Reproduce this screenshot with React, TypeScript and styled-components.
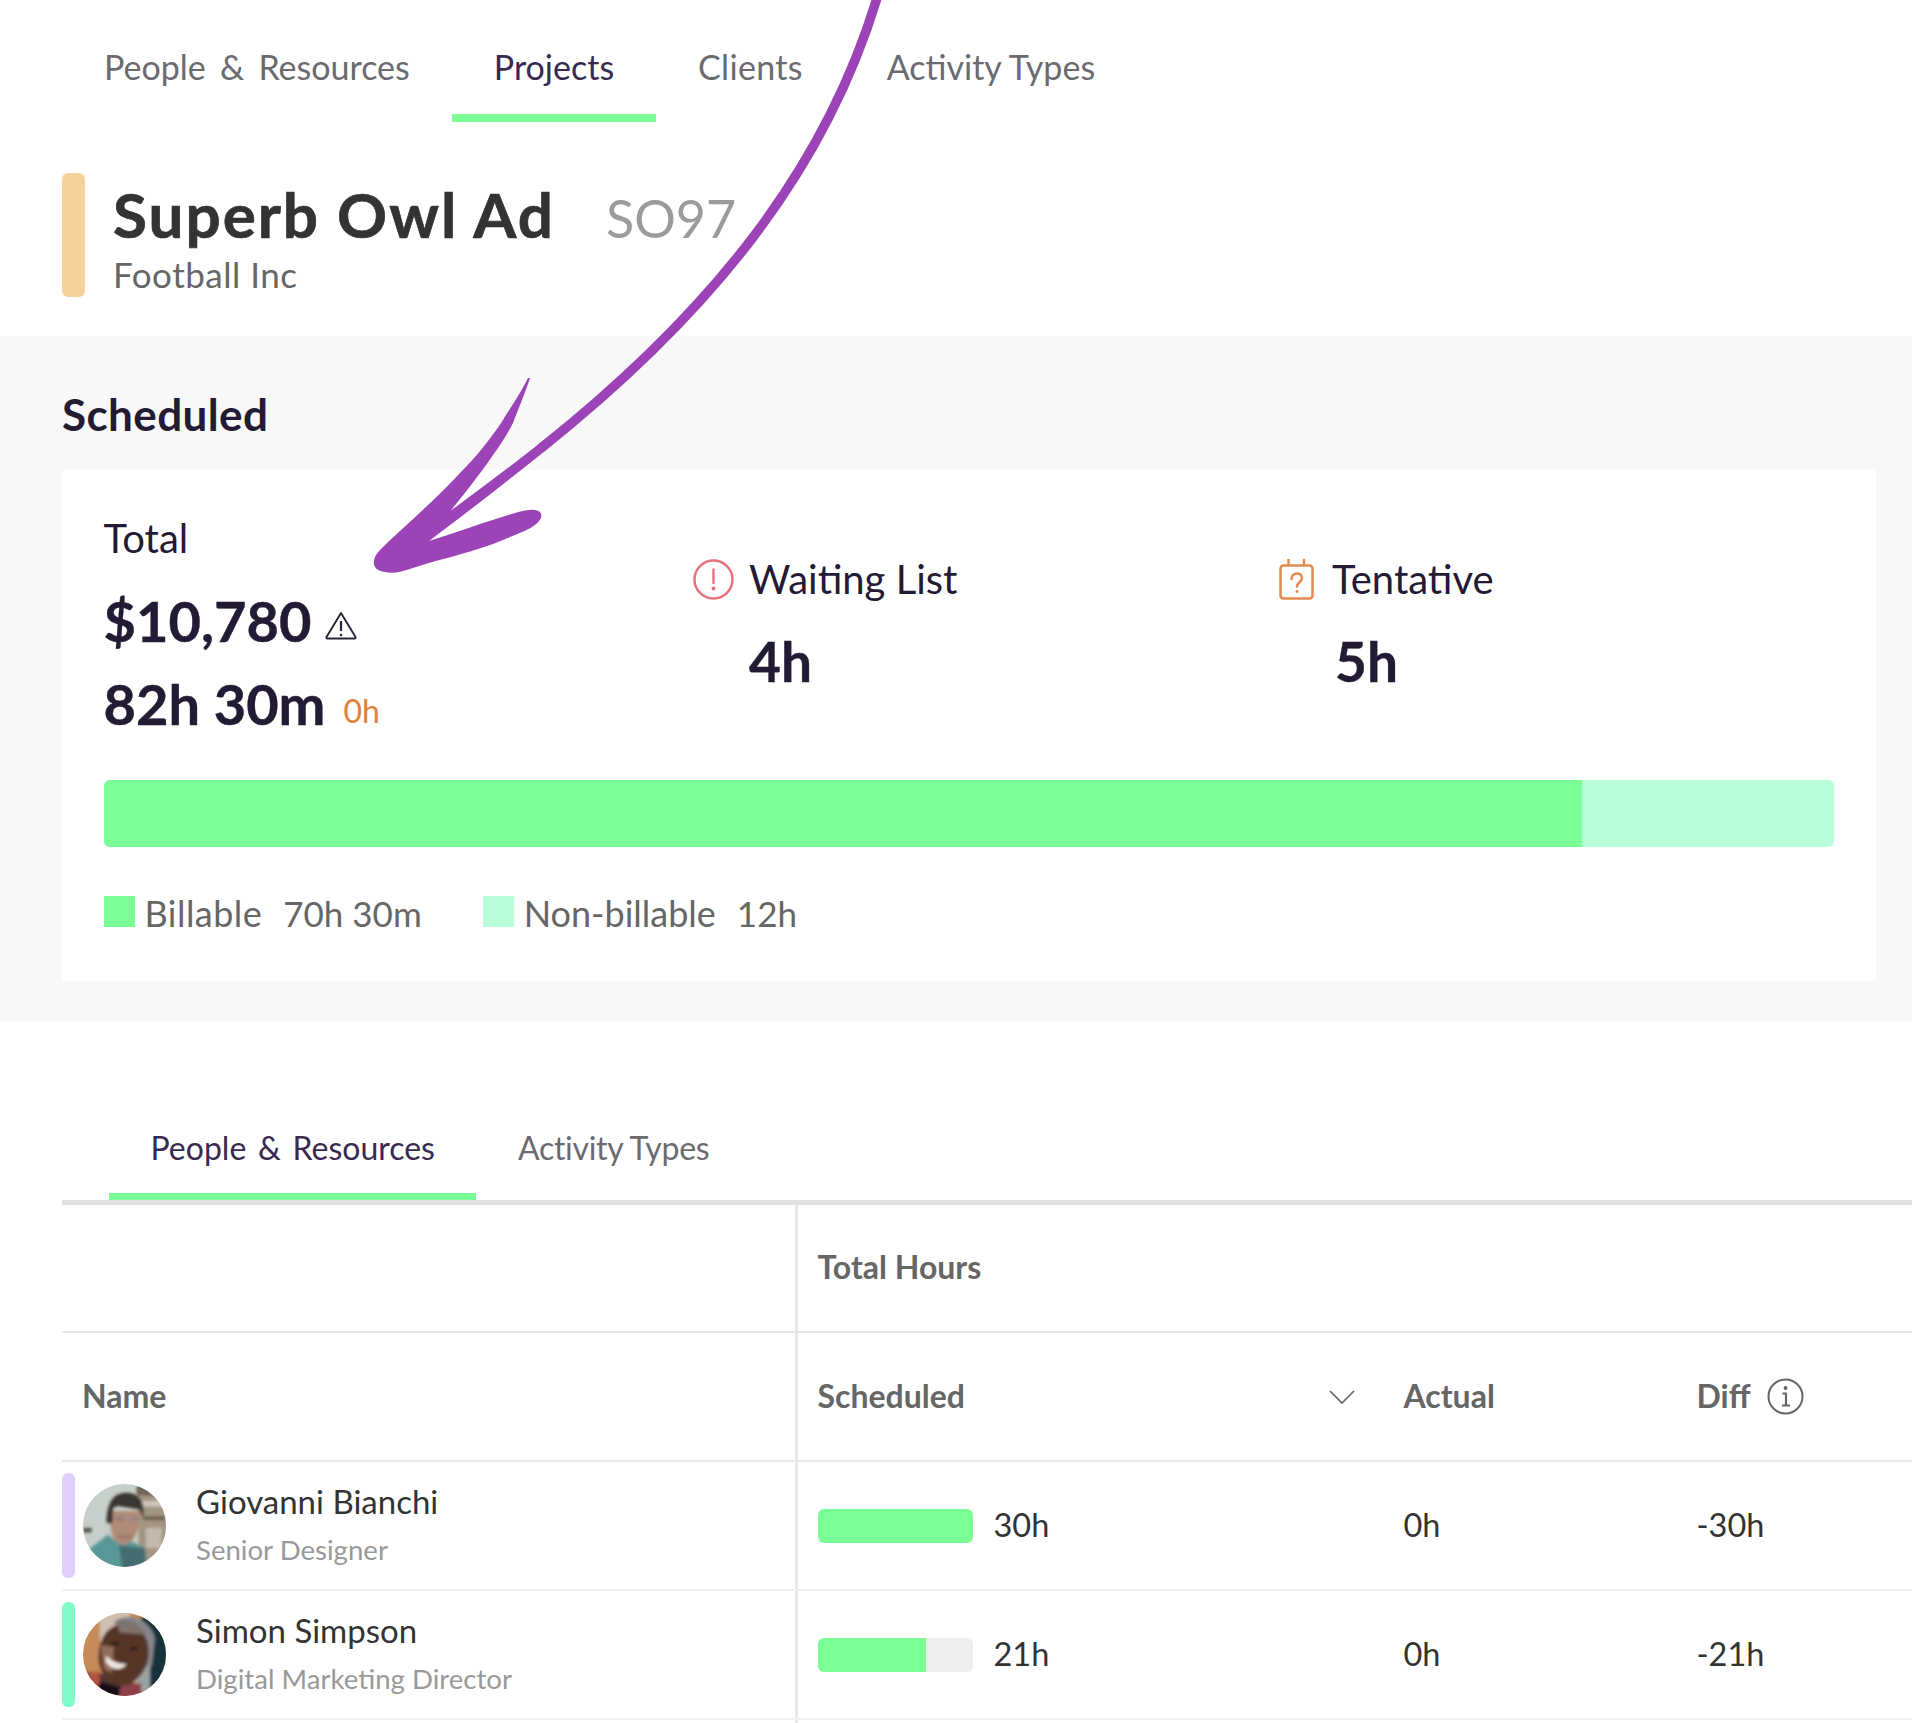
import React from "react";
import styled, { createGlobalStyle } from "styled-components";

const Global = createGlobalStyle`
  html, body { margin: 0; padding: 0; background: #fff; }
  body { font-family: Lato, "Liberation Sans", sans-serif; }
  * { box-sizing: border-box; }
`;

const Page = styled.div`
  position: relative;
  width: 1912px;
  height: 1723px;
  overflow: hidden;
  background: #fff;
  font-family: Lato, "Liberation Sans", sans-serif;
`;

const TopTabs = styled.nav`
  display: flex;
  padding-left: 62px;
  height: 122px;
`;

const TopTab = styled.div<{ $active?: boolean; $spread?: number }>`
  height: 122px;
  padding: 45px 42px 0;
  font-size: 34px;
  letter-spacing: ${(p) => p.$spread ?? 0}px;
  line-height: 44px;
  white-space: nowrap;
  color: ${(p) => (p.$active ? "#38294f" : "#6a6a70")};
  border-bottom: 8px solid ${(p) => (p.$active ? "#7aff96" : "transparent")};
`;

const Amp = styled.span<{ $space: number }>`
  margin: 0 ${(p) => p.$space}px;
`;

const ProjectHeader = styled.header`
  display: flex;
  height: 124px;
  margin: 51px 0 39px 62px;
`;

const ColorTag = styled.div<{ $color: string }>`
  flex: none;
  width: 23px;
  height: 124px;
  border-radius: 6px;
  background: ${(p) => p.$color};
`;

const ProjectInfo = styled.div`
  padding: 5px 0 0 28px;
`;

const TitleRow = styled.div`
  display: flex;
  align-items: baseline;
  gap: 51px;
  height: 72px;
`;

const Title = styled.h1`
  margin: 0;
  font-size: 62px;
  font-weight: 700;
  letter-spacing: 2px;
  line-height: 72px;
  color: #333;
  -webkit-text-stroke: 0.7px #333;
`;

const Code = styled.span`
  font-size: 52px;
  line-height: 72px;
  color: #9b9b9b;
`;

const Client = styled.div`
  font-size: 35px;
  letter-spacing: 0.5px;
  line-height: 42px;
  margin-top: 3px;
  color: #666;
`;

const Summary = styled.section`
  height: 686px;
  padding: 50px 36px 0 62px;
  background: #f8f8f8;
`;

const SummaryTitle = styled.h2`
  margin: 0 0 28px;
  font-size: 44px;
  font-weight: 700;
  letter-spacing: 0.4px;
  line-height: 56px;
  color: #231a33;
`;

const Card = styled.div`
  height: 511px;
  padding: 46px 42px 0 41.5px;
  background: #fff;
`;

const Stats = styled.div`
  display: grid;
  grid-template-columns: 589.5px 586px 1fr;
  height: 229px;
`;

const Stat = styled.div<{ $offset?: boolean }>`
  padding-top: ${(p) => (p.$offset ? "41px" : "0")};
`;

const StatLabel = styled.div<{ $under?: number }>`
  display: flex;
  align-items: center;
  gap: 15px;
  height: 44px;
  margin-bottom: ${(p) => p.$under ?? 0}px;
  font-size: 40px;
  line-height: 44px;
  color: #231a33;
`;

const StatLine = styled.div`
  display: flex;
  align-items: center;
  height: 83px;
`;

const BigValue = styled.span`
  font-size: 56px;
  font-weight: 700;
  line-height: 83px;
  color: #231a33;
  -webkit-text-stroke: 0.4px #231a33;
`;

const Delta = styled.span`
  margin: 14px 0 0 18px;
  font-size: 32px;
  line-height: 40px;
  color: #e08038;
`;

const WarningWrap = styled.span`
  display: flex;
  margin: 10px 0 0 13px;
`;

const Value = styled.div`
  margin: 19px 0 0 56px;
  font-size: 55px;
  font-weight: 700;
  line-height: 83px;
  color: #231a33;
  -webkit-text-stroke: 0.4px #231a33;
`;

const Bar = styled.div`
  display: flex;
  height: 67px;
  margin-top: 35px;
  border-radius: 6px;
  overflow: hidden;
  background: #bafdd9;
`;

const BarFill = styled.div`
  height: 100%;
  background: #7aff96;
`;

const Legend = styled.div`
  display: flex;
  gap: 61px;
  margin-top: 49px;
`;

const LegendItem = styled.div`
  display: flex;
  align-items: center;
  height: 31px;
  font-size: 36px;
  color: #666;
`;

const Swatch = styled.span<{ $color: string }>`
  flex: none;
  width: 31px;
  height: 31px;
  margin: 0 10px 0 0;
  background: ${(p) => p.$color};
`;

const LegendLabel = styled.span<{ $spread?: number }>`
  padding-top: 2px;
  letter-spacing: ${(p) => p.$spread ?? 0}px;
`;

const LegendValue = styled.span`
  margin-left: 21px;
  padding-top: 2px;
  font-size: 35px;
`;

const SubTabs = styled.nav`
  display: flex;
  margin: 97px 0 0 62px;
  padding-left: 47px;
  height: 86px;
  border-bottom: 5px solid #e2e2e2;
`;

const SubTab = styled.div<{ $active?: boolean }>`
  height: 81px;
  padding: 8px 41.5px 0;
  font-size: 32px;
  letter-spacing: ${(p) => (p.$active ? "0" : "-0.3px")};
  line-height: 42px;
  white-space: nowrap;
  color: ${(p) => (p.$active ? "#38294f" : "#6a6a70")};
  border-bottom: 7px solid ${(p) => (p.$active ? "#7aff96" : "transparent")};
`;

const Table = styled.div`
  margin-left: 62px;
`;

const Row = styled.div<{ $height: number; $line: string }>`
  display: grid;
  grid-template-columns: 733px 1fr;
  height: ${(p) => p.$height}px;
  border-bottom: 2px solid ${(p) => p.$line};
`;

const NameCell = styled.div`
  display: flex;
  align-items: center;
  border-right: 3px solid #e8e8e8;
  margin-right: -3px;
`;

const NameHead = styled.span`
  margin-left: 20px;
  padding-bottom: 3px;
  font-size: 32px;
  font-weight: 700;
  color: #666;
`;

const RowTag = styled.div<{ $color: string }>`
  flex: none;
  width: 13px;
  height: 105px;
  border-radius: 6px;
  background: ${(p) => p.$color};
`;

const AvatarWrap = styled.div`
  flex: none;
  width: 83px;
  height: 83px;
  margin: 0 30px 0 8px;
  border-radius: 50%;
  overflow: hidden;
`;

const PersonName = styled.div`
  padding-bottom: 1px;
  font-size: 33px;
  line-height: 47px;
  color: #333;
`;

const PersonRole = styled.div`
  font-size: 27.6px;
  line-height: 48px;
  color: #999;
`;

const Cells = styled.div`
  display: grid;
  grid-template-columns: 586px 293px 1fr;
  align-items: center;
  padding-left: 22.5px;
  min-width: 0;
`;

const HeadText = styled.span`
  display: block;
  padding-bottom: 3px;
  font-size: 32px;
  font-weight: 700;
  color: #666;
`;

const HeadCell = styled.div<{ $between?: boolean }>`
  display: flex;
  align-items: center;
  justify-content: ${(p) => (p.$between ? "space-between" : "flex-start")};
  gap: 16px;
  padding-right: ${(p) => (p.$between ? "49px" : "0")};
`;

const HoursCell = styled.div`
  display: flex;
  align-items: center;
  gap: 21px;
`;

const HoursText = styled.span`
  padding-bottom: 2px;
  font-size: 32.5px;
  color: #333;
`;

const MiniBar = styled.div`
  width: 155px;
  height: 34px;
  border-radius: 6px;
  overflow: hidden;
  background: #eee;
`;

const MiniFill = styled.div`
  height: 100%;
  background: #7aff96;
`;

const PlainCell = styled.div`
  padding-bottom: 2px;
  font-size: 32.5px;
  color: #333;
`;

const ArrowSvg = styled.svg`
  position: absolute;
  left: 0;
  top: 0;
  pointer-events: none;
`;

const Arrow = () => (
  <ArrowSvg width="1912" height="700" viewBox="0 0 1912 700">
    <path
      fill="none"
      stroke="#9b43b7"
      strokeWidth="9.5"
      d="M877 -2 C825 170 711.6 312.6 540 449"
    />
    <path
      fill="#9b43b7"
      d="M544 440 L540 443 C511 466 480.7 488.7 450.7 510.7 C480 475 505 440 513 423 C522 400 528 385 530 378 L528 378 C518 398 510 408 503 420 C490 440 475 458 460 473 C430 505 400 530 380 550 C372 558 370 570 385 572 C393 574 400 572 410 569 C432 561 480 551 510 537 C520 533 527 530 532 527 C544 520 544 511 535 510 C530 509 522 511 515 513 C490 520 455 533 429 541 C466.6 513 503.3 484 540 455 L548 448 Z"
    />
  </ArrowSvg>
);

const WaitingIcon = () => (
  <svg width="41" height="41" viewBox="0 0 41 41" fill="none">
    <circle cx="20.5" cy="20.5" r="19" stroke="#e8707a" strokeWidth="2.4" />
    <path d="M20.5 10.5 V24" stroke="#e8707a" strokeWidth="2.4" strokeLinecap="round" />
    <circle cx="20.5" cy="29.5" r="1.9" fill="#e8707a" />
  </svg>
);

const TentativeIcon = () => (
  <svg width="38" height="41" viewBox="0 0 38 41" fill="none" stroke="#e58a4e" strokeWidth="2.5">
    <rect x="1.5" y="6.5" width="32" height="33" rx="3" />
    <path d="M9.5 0 V6 M25 0 V6" />
    <path d="M12.5 20 C12.5 12.5 23 13 23 19 C23 23 18 23.5 18 27.5" strokeLinecap="round" />
    <circle cx="18" cy="32.5" r="1.4" fill="#e58a4e" stroke="none" />
  </svg>
);

const WarningIcon = () => (
  <svg width="32" height="29" viewBox="0 0 32 29" fill="none" stroke="#2c2438" strokeWidth="1.9">
    <path d="M16 2 L30.5 26 Q31 27.5 29.5 27.5 L2.5 27.5 Q1 27.5 1.5 26 Z" strokeLinejoin="round" />
    <path d="M16 10 V20" strokeWidth="2.2" />
    <circle cx="16" cy="24" r="1.3" fill="#2c2438" stroke="none" />
  </svg>
);

const Chevron = () => (
  <svg width="26" height="14" viewBox="0 0 26 14" fill="none" stroke="#666" strokeWidth="1.7">
    <path d="M1 1 L13 13 L25 1" />
  </svg>
);

const InfoIcon = () => (
  <svg width="37" height="37" viewBox="0 0 37 37" fill="none" stroke="#666" strokeWidth="2">
    <circle cx="18.5" cy="18.5" r="17" />
    <path d="M15.5 15.5 H19 V27 M15 27.5 H23" strokeWidth="2.2" />
    <circle cx="18.5" cy="10" r="1.9" fill="#666" stroke="none" />
  </svg>
);

const AvatarOne = () => (
  <svg width="83" height="83" viewBox="20 24 248 248">
    <defs>
      <filter id="blurA" x="-20%" y="-20%" width="140%" height="140%">
        <feGaussianBlur stdDeviation="5" />
      </filter>
    </defs>
    <rect x="0" y="0" width="300" height="300" fill="#c6cfca" />
    <g filter="url(#blurA)">
      <rect x="185" y="20" width="95" height="260" fill="#a39583" />
      <rect x="195" y="75" width="75" height="16" fill="#d0c8bc" />
      <rect x="180" y="28" width="90" height="30" fill="#6f6055" />
      <rect x="200" y="120" width="65" height="12" fill="#6b5f55" />
      <rect x="208" y="155" width="46" height="60" fill="#c4baac" />
      <rect x="20" y="155" width="26" height="14" fill="#4c5a46" />
      <path d="M30 225 L95 175 L125 200 L165 195 L205 215 L215 290 L30 290 Z" fill="#5a9898" />
      <path d="M128 208 L205 215 L210 290 L138 290 Z" fill="#476c70" />
      <path d="M100 105 C100 190 118 205 140 205 C168 205 190 170 190 105 Z" fill="#b08a78" />
      <path d="M90 140 L108 142 L110 95 L125 90 L188 100 L200 125 C208 68 180 50 150 50 C112 50 92 75 90 140 Z" fill="#3a3431" />
      <rect x="118" y="124" width="26" height="9" fill="#85797a" />
      <rect x="160" y="124" width="26" height="9" fill="#8a8186" />
      <rect x="124" y="176" width="44" height="10" fill="#9d7767" />
    </g>
  </svg>
);

const AvatarTwo = () => (
  <svg width="83" height="83" viewBox="20 24 248 248">
    <defs>
      <filter id="blurB" x="-20%" y="-20%" width="140%" height="140%">
        <feGaussianBlur stdDeviation="4.5" />
      </filter>
    </defs>
    <rect x="0" y="0" width="300" height="300" fill="#c48a58" />
    <g filter="url(#blurB)">
      <rect x="70" y="10" width="90" height="100" fill="#cfc0b2" />
      <rect x="195" y="10" width="90" height="280" fill="#17333a" />
      <rect x="180" y="180" width="40" height="80" fill="#9aa2a0" />
      <path d="M30 200 L70 205 L190 240 L200 290 L30 290 Z" fill="#4f3436" />
      <path d="M35 205 L65 198 L75 240 L45 240 Z" fill="#b0533f" />
      <path d="M135 240 L195 235 L190 285 L125 285 Z" fill="#8d3f46" />
      <path d="M70 228 L130 245 L125 290 L60 285 Z" fill="#121115" />
      <path d="M110 55 C140 22 215 30 235 100 L225 185 L190 170 L160 70 Z" fill="#85868c" />
      <path d="M68 140 C76 62 130 48 172 62 C216 82 226 140 208 184 C186 232 140 252 104 232 C80 216 64 184 68 140 Z" fill="#573628" />
      <path d="M120 48 C150 38 192 52 204 88 L130 82 Z" fill="#7f726d" />
      <path d="M74 120 L112 125 L106 205 L82 190 Z" fill="#936d5a" />
      <path d="M88 152 C108 172 135 178 150 176 C140 195 108 200 88 170 Z" fill="#f0e8e3" />
      <ellipse cx="116" cy="115" rx="13" ry="5" fill="#241613" />
      <ellipse cx="172" cy="130" rx="12" ry="5" fill="#241613" />
    </g>
  </svg>
);

const App = () => (
  <Page>
    <Global />
    <TopTabs>
      <TopTab>
        People <Amp $space={5.5}>&amp;</Amp> Resources
      </TopTab>
      <TopTab $active>Projects</TopTab>
      <TopTab $spread={0.3}>Clients</TopTab>
      <TopTab>Activity Types</TopTab>
    </TopTabs>
    <ProjectHeader>
      <ColorTag $color="#f6d29b" />
      <ProjectInfo>
        <TitleRow>
          <Title>Superb Owl Ad</Title>
          <Code>SO97</Code>
        </TitleRow>
        <Client>Football Inc</Client>
      </ProjectInfo>
    </ProjectHeader>
    <Summary>
      <SummaryTitle>Scheduled</SummaryTitle>
      <Card>
        <Stats>
          <Stat>
            <StatLabel $under={19}>Total</StatLabel>
            <StatLine>
              <BigValue>$10,780</BigValue>
              <WarningWrap>
                <WarningIcon />
              </WarningWrap>
            </StatLine>
            <StatLine>
              <BigValue>82h 30m</BigValue>
              <Delta>0h</Delta>
            </StatLine>
          </Stat>
          <Stat $offset>
            <StatLabel>
              <WaitingIcon />
              Waiting List
            </StatLabel>
            <Value>4h</Value>
          </Stat>
          <Stat $offset>
            <StatLabel>
              <TentativeIcon />
              Tentative
            </StatLabel>
            <Value>5h</Value>
          </Stat>
        </Stats>
        <Bar>
          <BarFill style={{ width: `${(70.5 / 82.5) * 100}%` }} />
        </Bar>
        <Legend>
          <LegendItem>
            <Swatch $color="#7aff96" />
            <LegendLabel $spread={0.45}>Billable</LegendLabel>
            <LegendValue>70h 30m</LegendValue>
          </LegendItem>
          <LegendItem>
            <Swatch $color="#bafdd9" />
            <LegendLabel>Non-billable</LegendLabel>
            <LegendValue>12h</LegendValue>
          </LegendItem>
        </Legend>
      </Card>
    </Summary>
    <SubTabs>
      <SubTab $active>
        People <Amp $space={3.5}>&amp;</Amp> Resources
      </SubTab>
      <SubTab>Activity Types</SubTab>
    </SubTabs>
    <Table>
      <Row $height={128} $line="#e8e8e8">
        <NameCell />
        <Cells>
          <HeadText>Total Hours</HeadText>
        </Cells>
      </Row>
      <Row $height={129} $line="#e8e8e8">
        <NameCell>
          <NameHead>Name</NameHead>
        </NameCell>
        <Cells>
          <HeadCell $between>
            <HeadText>Scheduled</HeadText>
            <Chevron />
          </HeadCell>
          <HeadCell>
            <HeadText>Actual</HeadText>
          </HeadCell>
          <HeadCell>
            <HeadText>Diff</HeadText>
            <InfoIcon />
          </HeadCell>
        </Cells>
      </Row>
      <Row $height={129} $line="#f0f0f0">
        <NameCell>
          <RowTag $color="#ded0fb" />
          <AvatarWrap>
            <AvatarOne />
          </AvatarWrap>
          <div>
            <PersonName>Giovanni Bianchi</PersonName>
            <PersonRole>Senior Designer</PersonRole>
          </div>
        </NameCell>
        <Cells>
          <HoursCell>
            <MiniBar>
              <MiniFill style={{ width: "100%" }} />
            </MiniBar>
            <HoursText>30h</HoursText>
          </HoursCell>
          <PlainCell>0h</PlainCell>
          <PlainCell>-30h</PlainCell>
        </Cells>
      </Row>
      <Row $height={129} $line="#f0f0f0">
        <NameCell>
          <RowTag $color="#80fbc8" />
          <AvatarWrap>
            <AvatarTwo />
          </AvatarWrap>
          <div>
            <PersonName>Simon Simpson</PersonName>
            <PersonRole>Digital Marketing Director</PersonRole>
          </div>
        </NameCell>
        <Cells>
          <HoursCell>
            <MiniBar>
              <MiniFill style={{ width: "70%" }} />
            </MiniBar>
            <HoursText>21h</HoursText>
          </HoursCell>
          <PlainCell>0h</PlainCell>
          <PlainCell>-21h</PlainCell>
        </Cells>
      </Row>
      <Row $height={20} $line="transparent">
        <NameCell />
      </Row>
    </Table>
    <Arrow />
  </Page>
);

export default App;
